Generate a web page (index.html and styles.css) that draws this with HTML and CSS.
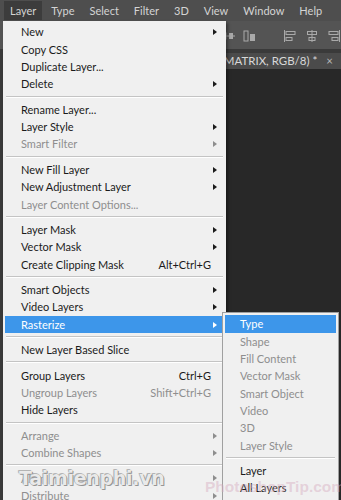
FILE: index.html
```html
<!DOCTYPE html>
<html>

<head>
    <title>Layer menu</title>
    <link rel="stylesheet" href="styles.css">
</head>

<body>
    <div class="menubar">
        <span class="top-item open">Layer</span>
        <span class="top-item">Type</span>
        <span class="top-item">Select</span>
        <span class="top-item">Filter</span>
        <span class="top-item">3D</span>
        <span class="top-item">View</span>
        <span class="top-item">Window</span>
        <span class="top-item">Help</span>
    </div>

    <div class="toolbar">
        <svg class="tool-icon" width="14" height="12" viewBox="0 0 14 12">
            <rect x="1" y="3" width="4" height="6" fill="none" stroke="#a9a9a9" />
            <rect x="8" y="3" width="4" height="6" fill="#a9a9a9" />
            <line x1="0" y1="6" x2="14" y2="6" stroke="#a9a9a9" />
        </svg>
        <svg class="tool-icon" width="14" height="12" viewBox="0 0 14 12">
            <rect x="1" y="1" width="4" height="10" fill="none" stroke="#a9a9a9" />
            <rect x="7" y="4" width="5" height="7" fill="#a9a9a9" />
        </svg>
        <span class="tool-gap"></span>
        <svg class="tool-icon" width="14" height="12" viewBox="0 0 14 12">
            <line x1="1.5" y1="0" x2="1.5" y2="12" stroke="#a9a9a9" />
            <rect x="3" y="1.5" width="9" height="3" fill="none" stroke="#a9a9a9" />
            <rect x="3" y="7.5" width="6" height="3" fill="none" stroke="#a9a9a9" />
        </svg>
        <svg class="tool-icon" width="14" height="12" viewBox="0 0 14 12">
            <line x1="7" y1="0" x2="7" y2="12" stroke="#a9a9a9" />
            <rect x="2.5" y="1.5" width="9" height="3" fill="none" stroke="#a9a9a9" />
            <rect x="4" y="7.5" width="6" height="3" fill="none" stroke="#a9a9a9" />
        </svg>
        <svg class="tool-icon" width="14" height="12" viewBox="0 0 14 12">
            <line x1="12.5" y1="0" x2="12.5" y2="12" stroke="#a9a9a9" />
            <rect x="2" y="1.5" width="9" height="3" fill="none" stroke="#a9a9a9" />
            <rect x="5" y="7.5" width="6" height="3" fill="none" stroke="#a9a9a9" />
        </svg>
    </div>

    <div class="workspace">
        <div class="side"></div>
        <div class="docarea">
            <div class="tabs">
                <div class="tab">(MATRIX, RGB/8) * <span class="tab-close">×</span></div>
            </div>
            <div class="canvas"></div>
        </div>
    </div>

    <div class="menu">
        <div class="item sub">New</div>
        <div class="item">Copy CSS</div>
        <div class="item">Duplicate Layer...</div>
        <div class="item sub">Delete</div>
        <div class="sep"></div>
        <div class="item">Rename Layer...</div>
        <div class="item sub">Layer Style</div>
        <div class="item sub off">Smart Filter</div>
        <div class="sep"></div>
        <div class="item sub">New Fill Layer</div>
        <div class="item sub">New Adjustment Layer</div>
        <div class="item off">Layer Content Options...</div>
        <div class="sep"></div>
        <div class="item sub">Layer Mask</div>
        <div class="item sub">Vector Mask</div>
        <div class="item">Create Clipping Mask <span class="key">Alt+Ctrl+G</span></div>
        <div class="sep"></div>
        <div class="item sub">Smart Objects</div>
        <div class="item sub">Video Layers</div>
        <div class="item sub active">Rasterize</div>
        <div class="sep"></div>
        <div class="item">New Layer Based Slice</div>
        <div class="sep"></div>
        <div class="item">Group Layers <span class="key">Ctrl+G</span></div>
        <div class="item off">Ungroup Layers <span class="key">Shift+Ctrl+G</span></div>
        <div class="item">Hide Layers</div>
        <div class="sep"></div>
        <div class="item sub off">Arrange</div>
        <div class="item sub off">Combine Shapes</div>
        <div class="sep"></div>
        <div class="item sub off">Align</div>
        <div class="item sub off">Distribute</div>
    </div>

    <div class="submenu">
        <div class="item active">Type</div>
        <div class="item off">Shape</div>
        <div class="item off">Fill Content</div>
        <div class="item off">Vector Mask</div>
        <div class="item off">Smart Object</div>
        <div class="item off">Video</div>
        <div class="item off">3D</div>
        <div class="item off">Layer Style</div>
        <div class="sep"></div>
        <div class="item">Layer</div>
        <div class="item">All Layers</div>
    </div>

    <div class="mark mark-left">Taimienphi.vn</div>
    <div class="mark mark-right">PhotoshopTip.com</div>
</body>

</html>
```

FILE: styles.css
```css
body {
    margin: 0;
    background-color: #282828;
    font-family: Lato, "Noto Sans", sans-serif;
    font-size: 11px;
    overflow: hidden;
    height: 500px;
}

.menubar {
    display: flex;
    align-items: center;
    height: 21px;
    padding-left: 4px;
    background-color: #4e4e4e;
    color: #d4d4d4;
}

.top-item {
    padding: 0 6px;
    margin-right: 3px;
    line-height: 19px;
}

.top-item.open {
    background-color: #3c3c3c;
}

.toolbar {
    display: flex;
    align-items: center;
    justify-content: flex-end;
    gap: 8px;
    height: 26px;
    padding-top: 2px;
    background-color: #545454;
    border-bottom: 4px solid #3a3a3a;
}

.tool-icon {
    display: block;
}

.tool-gap {
    width: 10px;
}

.workspace {
    display: flex;
}

.side {
    width: 226px;
    background-color: #3a3a3a;
}

.docarea {
    flex: 1;
}

.tabs {
    display: flex;
    background-color: #3a3a3a;
}

.tab {
    height: 16px;
    line-height: 16px;
    padding: 0 8px 0 1px;
    background-color: #4b4b4b;
    color: #d8d8d8;
    font-size: 11.5px;
    white-space: nowrap;
}

.tab-close {
    margin-left: 6px;
    color: #b8b8b8;
}

.canvas {
    height: 440px;
    background-color: #282828;
}

/* dropdown menus */

.menu {
    position: absolute;
    left: 3px;
    top: 21px;
    width: 219px;
    padding: 2.35px 2px 0;
    background-color: #f0f0f0;
    box-shadow: 2px 2px 3px rgba(0, 0, 0, 0.4);
    height: 480px;
}

.submenu {
    position: absolute;
    left: 222px;
    top: 312px;
    width: 111px;
    padding: 2.35px 2px 10px;
    background-color: #f0f0f0;
    border: 1px solid #a0a0a0;
}

.item {
    position: relative;
    display: flex;
    align-items: center;
    justify-content: space-between;
    height: 17.3px;
    padding: 0 12px 0 16px;
    color: #1b1b1b;
    white-space: nowrap;
}

.submenu .item {
    padding-left: 15px;
}

.item.off {
    color: #8e8e8e;
}

.item.active {
    background-color: #3d96ea;
    color: #fff;
}

.item.sub::after {
    content: "";
    position: absolute;
    right: 7px;
    top: 6px;
    border-left: 4px solid #1b1b1b;
    border-top: 3px solid transparent;
    border-bottom: 3px solid transparent;
}

.item.sub.off::after {
    border-left-color: #8e8e8e;
}

.item.sub.active::after {
    border-left-color: #fff;
}

.key {
    margin-right: 1px;
}

.sep {
    height: 0;
    margin: 3.1px 1px;
    border-top: 1px solid #c4c4c4;
    border-bottom: 1px solid #fff;
}

/* watermarks */

.mark {
    position: absolute;
    font-weight: bold;
    white-space: nowrap;
}

.mark-left {
    left: 19px;
    top: 467px;
    font-family: "DejaVu Sans", sans-serif;
    font-size: 19px;
    color: rgba(255, 255, 255, 0.85);
    text-shadow: 0 0 1px #777, 1px 1px 0 #999, -1px -1px 0 #bbb;
    letter-spacing: -0.3px;
}

.mark-right {
    left: 205px;
    top: 478px;
    font-family: "Liberation Sans", sans-serif;
    font-size: 15.5px;
    color: rgba(214, 170, 190, 0.45);
}
```
